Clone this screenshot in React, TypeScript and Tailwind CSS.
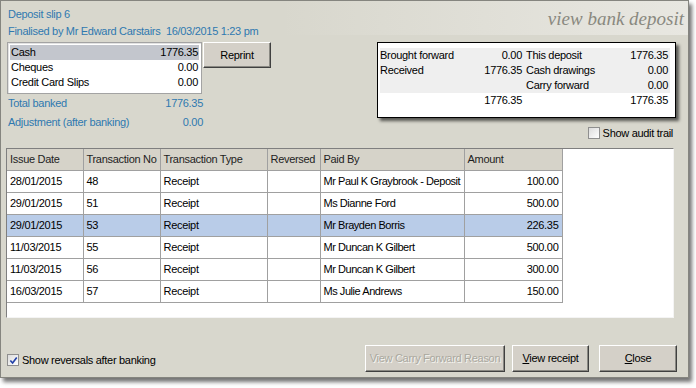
import React from "react";

const rows = [
  { date: "28/01/2015", no: "48", type: "Receipt", paidBy: "Mr Paul K Graybrook - Deposit", amount: "100.00" },
  { date: "29/01/2015", no: "51", type: "Receipt", paidBy: "Ms Dianne Ford", amount: "500.00" },
  { date: "29/01/2015", no: "53", type: "Receipt", paidBy: "Mr Brayden Borris", amount: "226.35", selected: true },
  { date: "11/03/2015", no: "55", type: "Receipt", paidBy: "Mr Duncan K Gilbert", amount: "500.00" },
  { date: "11/03/2015", no: "56", type: "Receipt", paidBy: "Mr Duncan K Gilbert", amount: "300.00" },
  { date: "16/03/2015", no: "57", type: "Receipt", paidBy: "Ms Julie Andrews", amount: "150.00" },
];

function Btn({
  children,
  className = "",
  disabled = false,
}: {
  children: React.ReactNode;
  className?: string;
  disabled?: boolean;
}) {
  return (
    <div
      className={`flex items-center justify-center border border-t-white border-l-white border-r-[#404040] border-b-[#404040] bg-[#d4d0c8] shadow-[inset_-1px_-1px_0_#8a8983] ${
        disabled ? "text-[#aaa89f] [text-shadow:1px_1px_0_#f4f4f0]" : "text-black"
      } ${className}`}
    >
      {children}
    </div>
  );
}

function Check({ checked = false }: { checked?: boolean }) {
  return (
    <span className="flex h-[12px] w-[12px] items-center justify-center border border-[#8f8f8f] bg-gradient-to-br from-[#dcdcdc] to-white">
      {checked && (
        <svg viewBox="0 0 10 10" className="h-[9px] w-[9px]">
          <path d="M1.5 5 L4 7.8 L8.6 1.6" fill="none" stroke="#2140a8" strokeWidth="1.8" />
        </svg>
      )}
    </span>
  );
}

export default function App() {
  return (
    <div className="h-[388px] w-[696px] bg-white font-['Liberation_Sans',Arial,sans-serif] text-[11px] leading-none tracking-[-0.3px] text-black">
      <div className="flex h-[378px] w-[689px] flex-col border border-[#85857f] bg-[#d8d7cd] shadow-[3px_4px_4px_rgba(0,0,0,0.55)]">
        {/* Top section */}
        <div className="flex h-[147px]">
          <div className="flex w-[280px] flex-col pl-[6px] text-[#2f79b0]">
            <div className="mt-[5px] flex h-[17px] items-center pl-[1px]">Deposit slip 6</div>
            <div className="flex h-[17px] items-center pl-[1px]">
              Finalised by Mr Edward Carstairs&nbsp;&nbsp;16/03/2015 1:23 pm
            </div>
            <div className="mt-[2px] flex">
              <div className="h-[52px] w-[195px] border border-[#a3a3a3] bg-white p-[2px] text-black shadow-[inset_1px_1px_0_#e2e2e2]">
                <div className="flex h-[15px] items-center justify-between bg-[#c3c6cd] pl-[1px] pr-[1px]">
                  <span>Cash</span>
                  <span>1776.35</span>
                </div>
                <div className="flex h-[15px] items-center justify-between pl-[1px] pr-[1px]">
                  <span>Cheques</span>
                  <span>0.00</span>
                </div>
                <div className="flex h-[15px] items-center justify-between pl-[1px] pr-[1px]">
                  <span>Credit Card Slips</span>
                  <span>0.00</span>
                </div>
              </div>
              <Btn className="ml-[1px] h-[26px] w-[68px]">Reprint</Btn>
            </div>
            <div className="flex h-[19px] w-[196px] items-center justify-between pl-[1px]">
              <span>Total banked</span>
              <span>1776.35</span>
            </div>
            <div className="flex h-[19px] w-[196px] items-center justify-between pl-[1px]">
              <span>Adjustment (after banking)</span>
              <span>0.00</span>
            </div>
          </div>

          <div className="flex flex-1 flex-col items-end">
            <div className="flex h-[34px] w-full items-center justify-end bg-gradient-to-r from-transparent to-[#e8e7e1] pr-[4px]">
              <span className="font-['Liberation_Serif',serif] text-[19px] italic tracking-normal text-[#8a8980]">
                view bank deposit
              </span>
            </div>
            <div className="mr-[12px] mt-[7px] h-[76px] w-[299px] border border-black bg-white pl-[2px] pt-[5px] shadow-[3px_3px_3px_rgba(0,0,0,0.6)]">
              {[
                ["Brought forward", "0.00", "This deposit", "1776.35", true],
                ["Received", "1776.35", "Cash drawings", "0.00", true],
                ["", "", "Carry forward", "0.00", true],
                ["", "1776.35", "", "1776.35", false],
              ].map(([a, b, c, d, grey], i) => (
                <div
                  key={i}
                  className={`flex h-[15px] w-[290px] items-center ${grey ? "bg-[#efefef]" : ""}`}
                >
                  <div className="flex w-[142px] justify-between">
                    <span>{a}</span>
                    <span>{b}</span>
                  </div>
                  <div className="ml-[4px] flex w-[142px] justify-between">
                    <span>{c}</span>
                    <span>{d}</span>
                  </div>
                </div>
              ))}
            </div>
            <div className="mr-[15px] mt-[9px] flex items-center gap-[3px]">
              <Check />
              <span>Show audit trail</span>
            </div>
          </div>
        </div>

        {/* Transactions table */}
        <div className="ml-[5px] h-[170px] w-[668px] border border-t-[#7f7f7f] border-l-[#7f7f7f] border-r-[#f4f4f4] border-b-[#f4f4f4] bg-white">
          <table className="w-[555px] table-fixed border-collapse">
            <colgroup>
              <col className="w-[76px]" />
              <col className="w-[77px]" />
              <col className="w-[107px]" />
              <col className="w-[53px]" />
              <col className="w-[144px]" />
              <col className="w-[98px]" />
            </colgroup>
            <thead>
              <tr className="h-[21px] bg-[#d6d3c9] text-[#1e1e1e]">
                {["Issue Date", "Transaction No", "Transaction Type", "Reversed", "Paid By", "Amount"].map((h) => (
                  <th key={h} className="whitespace-nowrap border border-t-0 border-l-0 border-[#a0a0a0] pl-[3px] text-left font-normal">
                    {h}
                  </th>
                ))}
              </tr>
            </thead>
            <tbody>
              {rows.map((r, i) => (
                <tr key={i} className={`h-[22px] whitespace-nowrap ${r.selected ? "bg-[#b9cce8]" : ""}`}>
                  <td className="border border-l-0 border-[#a0a0a0] pl-[3px]">{r.date}</td>
                  <td className="border border-[#a0a0a0] pl-[3px]">{r.no}</td>
                  <td className="border border-[#a0a0a0] pl-[3px]">{r.type}</td>
                  <td className="border border-[#a0a0a0] pl-[3px]"></td>
                  <td className="border border-[#a0a0a0] pl-[3px] tracking-[-0.45px]">{r.paidBy}</td>
                  <td className="border border-[#a0a0a0] pr-[3px] text-right">{r.amount}</td>
                </tr>
              ))}
            </tbody>
          </table>
        </div>

        {/* Bottom bar */}
        <div className="mt-[27px] flex h-[27px] items-center pl-[6px] pr-[11px]">
          <div className="flex items-center gap-[3px] pt-[3px]">
            <Check checked />
            <span>Show reversals after banking</span>
          </div>
          <div className="ml-auto flex h-[27px] items-stretch">
            <Btn disabled className="w-[140px]">View Carry Forward Reason</Btn>
            <Btn className="ml-[7px] w-[77px]">
              <span>
                <span className="underline">V</span>iew receipt
              </span>
            </Btn>
            <Btn className="ml-[10px] w-[78px]">
              <span>
                <span className="underline">C</span>lose
              </span>
            </Btn>
          </div>
        </div>
      </div>
    </div>
  );
}
